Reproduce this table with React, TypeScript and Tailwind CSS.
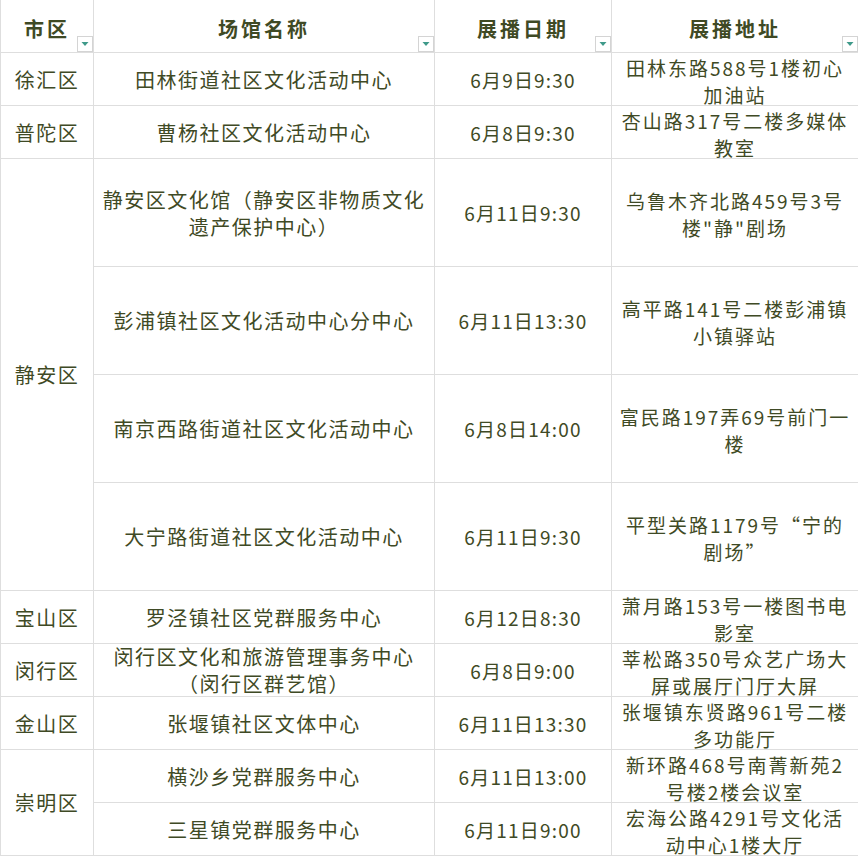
import React from "react";

const F = { fontFamily: '"Noto Sans CJK SC", "Noto Sans", sans-serif' };

type Row = { d?: string; span?: number; v: React.ReactNode; t: string; a: React.ReactNode };

const rows: Row[] = [
  { d: "徐汇区", v: "田林街道社区文化活动中心", t: "6月9日9:30", a: <>田林东路588号1楼初心<br />加油站</> },
  { d: "普陀区", v: "曹杨社区文化活动中心", t: "6月8日9:30", a: <>杏山路317号二楼多媒体<br />教室</> },
  { d: "静安区", span: 4, v: <>静安区文化馆（静安区非物质文化<br />遗产保护中心）</>, t: "6月11日9:30", a: <>乌鲁木齐北路459号3号<br />楼"静"剧场</> },
  { v: "彭浦镇社区文化活动中心分中心", t: "6月11日13:30", a: <>高平路141号二楼彭浦镇<br />小镇驿站</> },
  { v: "南京西路街道社区文化活动中心", t: "6月8日14:00", a: <>富民路197弄69号前门一<br />楼</> },
  { v: "大宁路街道社区文化活动中心", t: "6月11日9:30", a: <>平型关路1179号“宁的<br />剧场”</> },
  { d: "宝山区", v: "罗泾镇社区党群服务中心", t: "6月12日8:30", a: <>萧月路153号一楼图书电<br />影室</> },
  { d: "闵行区", v: <>闵行区文化和旅游管理事务中心<br />（闵行区群艺馆）</>, t: "6月8日9:00", a: <>莘松路350号众艺广场大<br />屏或展厅门厅大屏</> },
  { d: "金山区", v: "张堰镇社区文体中心", t: "6月11日13:30", a: <>张堰镇东贤路961号二楼<br />多功能厅</> },
  { d: "崇明区", span: 2, v: "横沙乡党群服务中心", t: "6月11日13:00", a: <>新环路468号南菁新苑2<br />号楼2楼会议室</> },
  { v: "三星镇党群服务中心", t: "6月11日9:00", a: <>宏海公路4291号文化活<br />动中心1楼大厅</> },
];

function Filter() {
  return (
    <div className="absolute right-0 bottom-0 w-[16px] h-[16px] border border-[#d4d4d4] bg-white flex items-center justify-center">
      <svg width="8" height="6" viewBox="0 0 8 6"><path d="M0.5 1 L7.5 1 L4 5 Z" fill="#3f9a8a" /></svg>
    </div>
  );
}

const cell = "border-r border-b border-[#dedede] flex items-center justify-center text-center text-[#3f4a25] leading-[27px]";

export default function App() {
  const rowsTpl = "grid-rows-[53px_53px_53px_108px_108px_108px_108px_53px_53px_53px_53px_53px]";
  return (
    <div className="w-[858px] h-[858px] bg-white overflow-hidden" style={F}>
      <div className={`grid grid-cols-[93px_341px_177px_247px] ${rowsTpl} border-l border-[#dedede]`}>
        {["市区", "场馆名称", "展播日期", "展播地址"].map((h) => (
          <div key={h} className={`${cell} relative pt-[4px] font-bold text-[20px] text-[#3a4a1c] tracking-[3px]`}>
            {h}
            <Filter />
          </div>
        ))}
        {rows.map((r, i) => (
          <React.Fragment key={i}>
            {r.d && (
              <div className={`${cell} text-[20px] tracking-[1.5px] ${r.span === 4 ? "row-span-4" : r.span === 2 ? "row-span-2" : ""}`}>{r.d}</div>
            )}
            <div className={`${cell} text-[20px] tracking-[1.5px]`}>{r.v}</div>
            <div className={`${cell} text-[19px] tracking-[1.2px]`}>{r.t}</div>
            <div className={`${cell} text-[19px] tracking-[2px] pt-[3px]`}>{r.a}</div>
          </React.Fragment>
        ))}
      </div>
    </div>
  );
}
